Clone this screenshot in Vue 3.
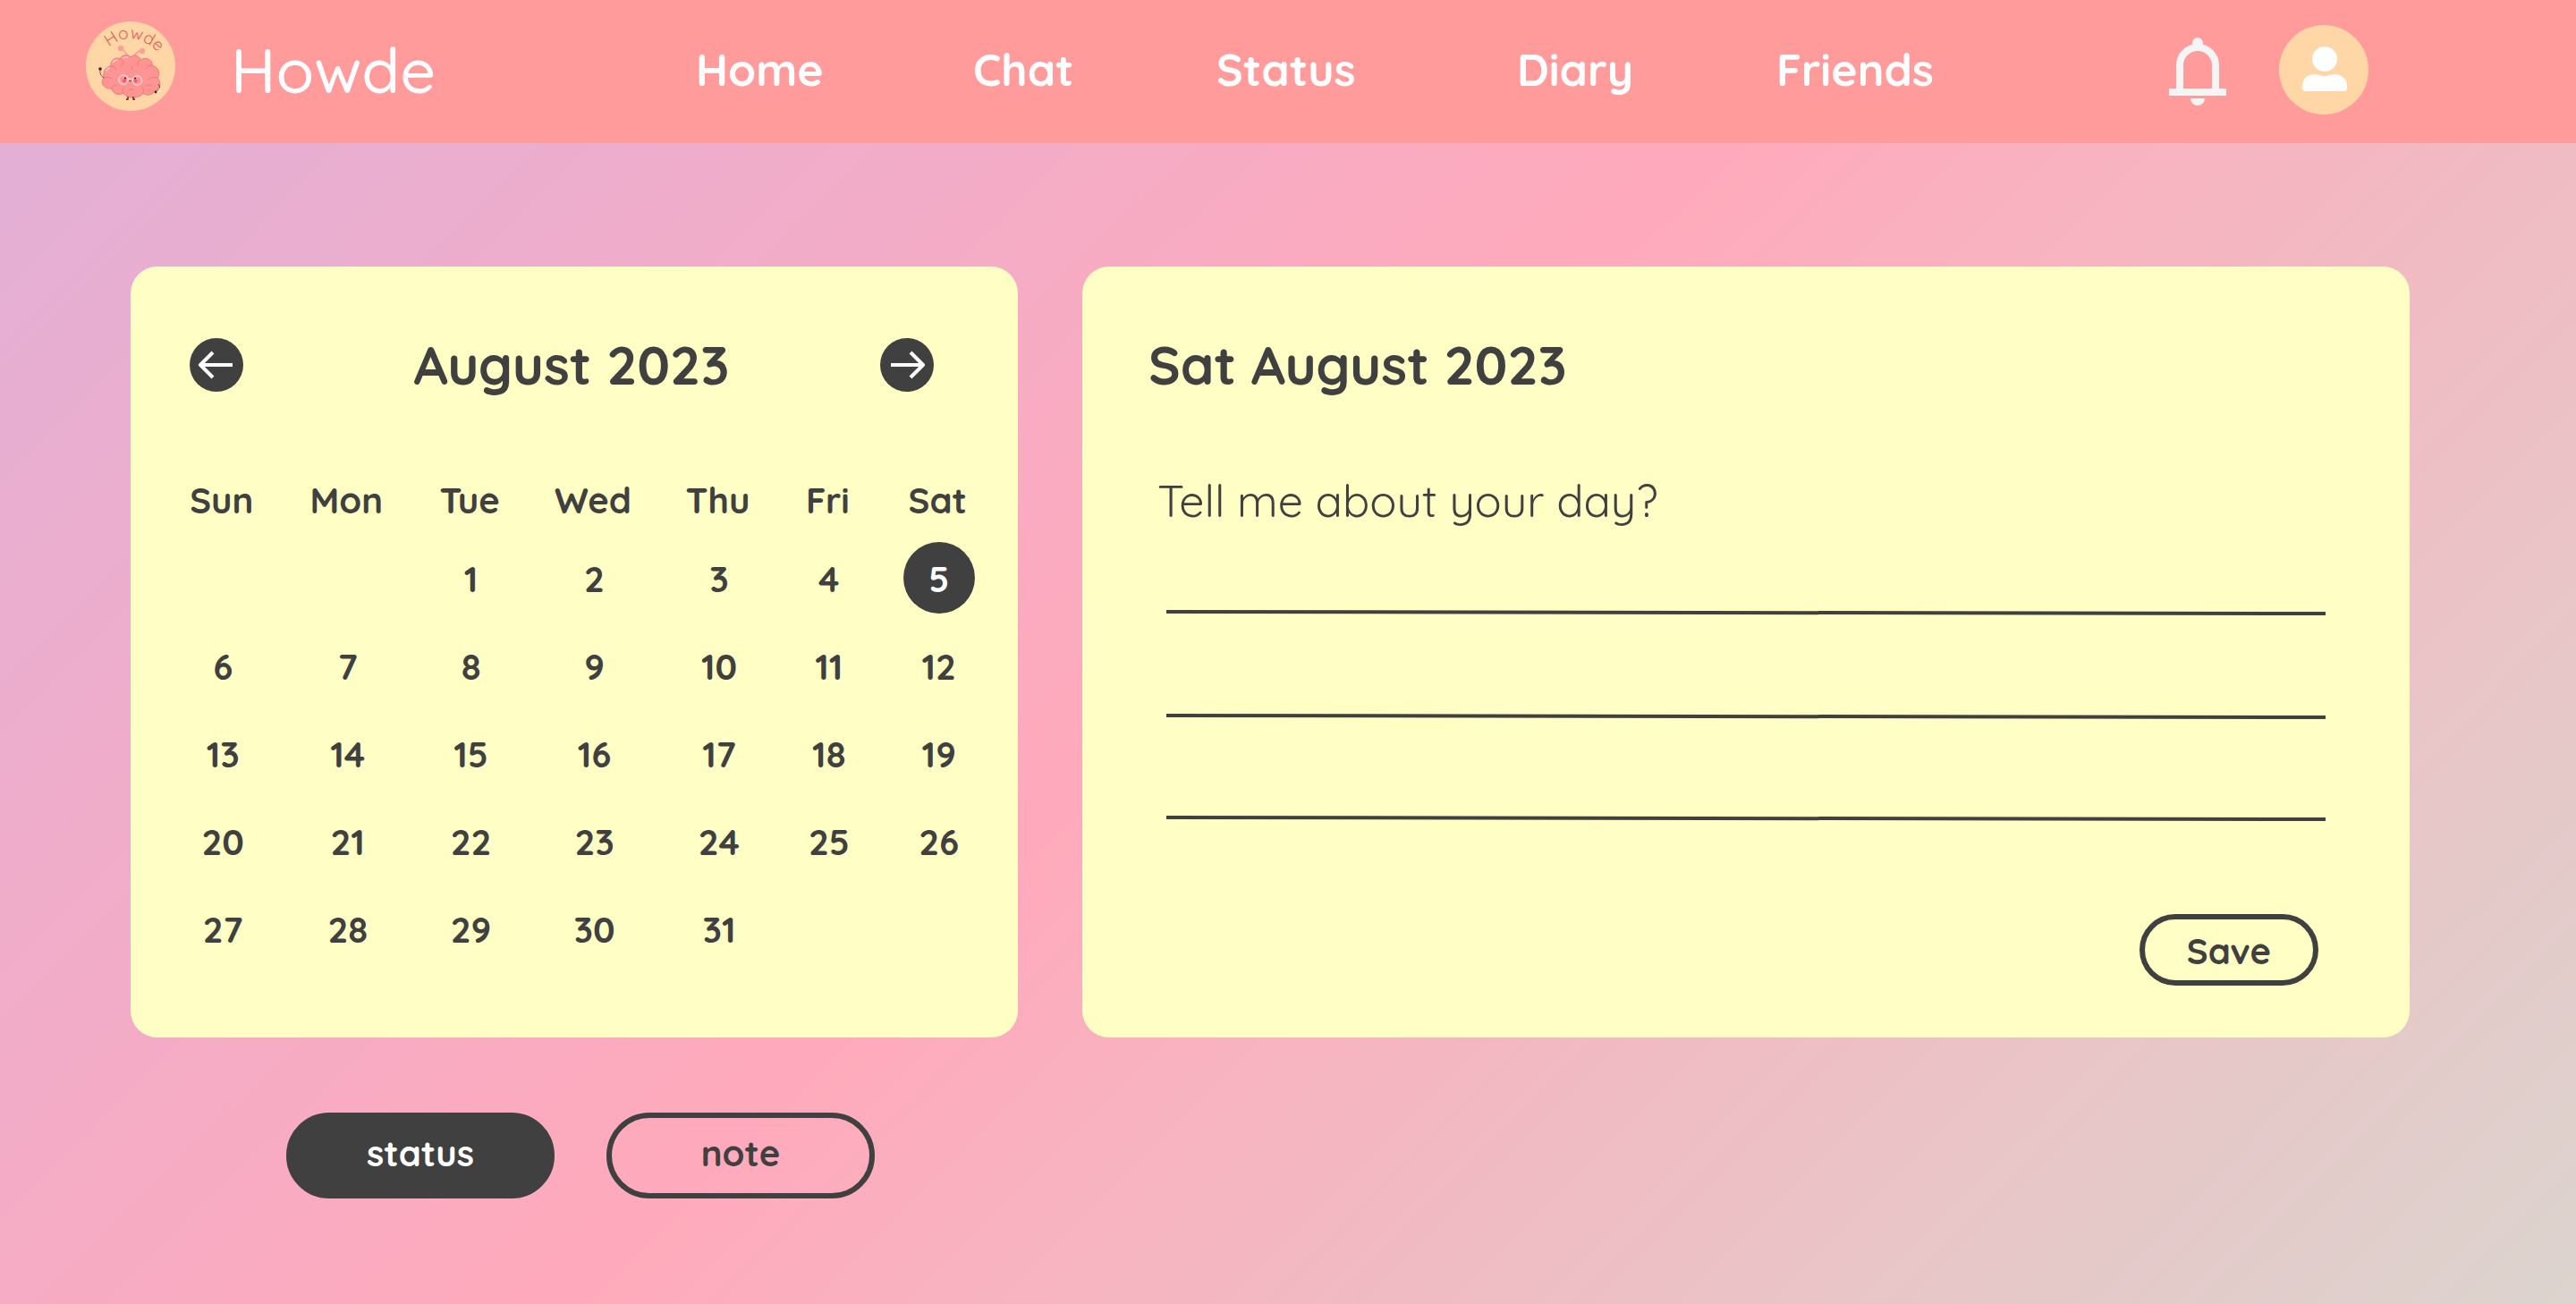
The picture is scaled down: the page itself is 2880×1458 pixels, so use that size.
<script setup>
import { ref } from 'vue'

const links = ['Home', 'Chat', 'Status', 'Diary', 'Friends']
const weekdays = ['Sun', 'Mon', 'Tue', 'Wed', 'Thu', 'Fri', 'Sat']
const firstWeekday = 2
const daysInMonth = 31

const weeks = Array.from({ length: 5 }, (_, w) =>
  Array.from({ length: 7 }, (_, d) => {
    const day = w * 7 + d - firstWeekday + 1
    return day >= 1 && day <= daysInMonth ? day : null
  })
)

const selected = ref(5)
const mode = ref('status')
const entry = ref('')
</script>

<template>
  <div class="page">
    <header class="topbar">
      <a class="brand" href="#">
        <svg class="logo" viewBox="0 0 100 100" aria-hidden="true">
          <defs>
            <path id="logo-arc" d="M26 29 Q50 8 78 32" />
          </defs>
          <circle cx="50" cy="50" r="50" fill="#ffd6a5" />
          <text class="logo-text"><textPath href="#logo-arc">Howde</textPath></text>
          <g fill="none" stroke="#f7a29b" stroke-width="2" stroke-linecap="round">
            <path d="M47 39 Q44 33 39 30" />
            <path d="M54 39 Q57 33 63 32" />
          </g>
          <circle cx="39" cy="30" r="3.2" fill="#f7a29b" />
          <circle cx="63" cy="33" r="3.2" fill="#f7a29b" />
          <path
            d="M28 50 C27 43 34 39 38 42 C41 36 48 37 50 40 C54 36 60 38 61 43 C67 39 75 43 74 49 C81 51 84 58 80 63 C85 68 83 76 77 77 C75 82 68 84 64 80 C61 86 46 87 42 80 C37 83 30 81 29 75 C21 76 15 69 20 63 C19 56 22 51 28 50 Z"
            fill="#ff9494"
            stroke="#ee7a76"
            stroke-width="1"
          />
          <g fill="none" stroke="#e8736f" stroke-width="0.8" stroke-linecap="round">
            <path d="M28 50 Q33 50 34 54" />
            <path d="M38 42 Q42 43 42 47 Q39 48 39 50" />
            <path d="M61 43 Q57 45 58 50" />
            <path d="M74 49 Q69 49 67 53" />
            <path d="M20 63 Q25 61 29 64" />
            <path d="M80 63 Q74 61 70 65" />
            <path d="M29 75 Q30 71 34 71" />
            <path d="M42 80 Q40 77 42 74" />
            <path d="M64 80 Q66 76 63 73" />
            <path d="M48 77 Q51 74 54 77" />
            <path d="M52 50 Q50 52 52 54" />
            <path d="M67 72 Q71 70 73 72" />
          </g>
          <g fill="none" stroke="#ffd9dc" stroke-width="1.2" stroke-linecap="round">
            <path d="M30 46 Q32 43 35 43" />
            <path d="M23 55 Q24 53 26 52" />
            <path d="M42 41 Q44 39 47 40" />
            <circle cx="42" cy="65" r="5.2" />
            <circle cx="57.5" cy="66" r="5.2" />
            <path d="M47 65 Q50 63 52 65" />
          </g>
          <circle cx="43" cy="66.5" r="2" fill="#ff5a62" />
          <circle cx="55.5" cy="66.5" r="2" fill="#ff5a62" />
          <circle cx="44" cy="63.5" r="1.1" fill="#4b1a1c" />
          <circle cx="55" cy="63.5" r="1.1" fill="#4b1a1c" />
          <path d="M48 66 Q49.5 68 51 66" fill="none" stroke="#4b1a1c" stroke-width="0.8" />
          <path d="M20 63 Q15 60 16 54" fill="none" stroke="#6a2b2b" stroke-width="0.8" />
          <circle cx="16" cy="53" r="1.8" fill="#4b1a1c" />
          <path d="M81 70 Q85 74 79 78" fill="none" stroke="#6a2b2b" stroke-width="0.8" />
          <path d="M82 75 Q84 77 81 79" fill="none" stroke="#ffffff" stroke-width="1.5" />
          <circle cx="78" cy="79" r="1.4" fill="#4b1a1c" />
          <path d="M47 84 V87 H45 M53 84 V87 H55" fill="none" stroke="#4b1a1c" stroke-width="1.3" />
        </svg>
        <span class="brand-name">Howde</span>
      </a>

      <nav class="nav" aria-label="Main">
        <a v-for="link in links" :key="link" href="#">{{ link }}</a>
      </nav>

      <div class="actions">
        <button class="icon-button" type="button" aria-label="Notifications">
          <svg class="bell" viewBox="0 0 64 76" aria-hidden="true">
            <path d="M26 12 V6 a6 6 0 0 1 12 0 V12 Z" fill="#f5f5f5" />
            <path d="M12 60 V31 a20 20 0 0 1 40 0 V60" fill="none" stroke="#f5f5f5" stroke-width="8" />
            <path d="M0 57 H64 V65 H0 Z M24 68 H40 a8 8 0 0 1 -16 0 Z" fill="#f5f5f5" />
          </svg>
        </button>
        <button class="icon-button" type="button" aria-label="Profile">
          <svg class="avatar" viewBox="0 0 100 100" aria-hidden="true">
            <circle cx="50" cy="50" r="50" fill="#ffd6a5" />
            <circle cx="51" cy="38" r="14" fill="#ffffff" />
            <path
              d="M38 55 Q42 55 45 56 Q51 58 57 56 Q60 55 64 55 Q76 57 76 69 V70 Q76 74 72 74 H30 Q26 74 26 70 V69 Q26 57 38 55 Z"
              fill="#ffffff"
            />
          </svg>
        </button>
      </div>
    </header>

    <main class="content">
      <section class="card calendar">
        <div class="calendar-head">
          <button class="icon-button" type="button" aria-label="Previous month">
            <svg class="arrow" viewBox="0 0 60 60" aria-hidden="true">
              <circle cx="30" cy="30" r="30" fill="#404040" />
              <path d="M48 30 H12 M26 16 L12 30 L26 44" fill="none" stroke="#ffffff" stroke-width="4" stroke-linejoin="round" />
            </svg>
          </button>
          <h2>August 2023</h2>
          <button class="icon-button" type="button" aria-label="Next month">
            <svg class="arrow" viewBox="0 0 60 60" aria-hidden="true">
              <circle cx="30" cy="30" r="30" fill="#404040" />
              <path d="M12 30 H48 M34 16 L48 30 L34 44" fill="none" stroke="#ffffff" stroke-width="4" stroke-linejoin="round" />
            </svg>
          </button>
        </div>

        <table class="month">
          <colgroup>
            <col v-for="name in weekdays" :key="name" :class="'col-' + name.toLowerCase()" />
          </colgroup>
          <thead>
            <tr>
              <th v-for="name in weekdays" :key="name" scope="col">{{ name }}</th>
            </tr>
          </thead>
          <tbody>
            <tr v-for="(week, w) in weeks" :key="w">
              <td v-for="(day, d) in week" :key="d">
                <button
                  v-if="day"
                  type="button"
                  class="day"
                  :class="{ selected: day === selected }"
                  @click="selected = day"
                >{{ day }}</button>
              </td>
            </tr>
          </tbody>
        </table>
      </section>

      <form class="card diary" @submit.prevent>
        <h2>Sat August 2023</h2>
        <label for="entry">Tell me about your day?</label>
        <div class="paper">
          <svg class="rules" viewBox="0 0 1296 238" preserveAspectRatio="none" aria-hidden="true">
            <g stroke="#404040" stroke-width="4">
              <path d="M0 2 L1296 4" />
              <path d="M0 118 L1296 120" />
              <path d="M0 232 L1296 234" />
            </g>
          </svg>
          <textarea id="entry" v-model="entry"></textarea>
        </div>
        <button class="pill save" type="submit">Save</button>
      </form>

      <div class="modes">
        <button
          v-for="name in ['status', 'note']"
          :key="name"
          type="button"
          class="pill mode"
          :class="{ active: mode === name }"
          @click="mode = name"
        >{{ name }}</button>
      </div>
    </main>
  </div>
</template>

<style>
body {
  margin: 0;
}
</style>

<style scoped>
.page {
  min-height: 100vh;
  box-sizing: border-box;
  background: linear-gradient(135deg, #e1b0d8 0%, #ffaabc 48%, #dcd4ce 100%);
  color: #404040;
  font-family: Quicksand, Lato, sans-serif;
  font-size: 40px;
  font-weight: 700;
}

button {
  font: inherit;
  color: inherit;
  cursor: pointer;
}

h2 {
  margin: 0;
  font-size: 60px;
  line-height: 72px;
  font-weight: 700;
}

.topbar {
  display: flex;
  align-items: center;
  height: 160px;
  padding: 0 232px 4px 96px;
  box-sizing: border-box;
  background: #ff9b9b;
  color: #ffffff;
}

.brand {
  display: flex;
  align-items: center;
  gap: 62px;
  width: 682px;
  color: inherit;
  text-decoration: none;
}

.logo {
  width: 100px;
  height: 100px;
  margin-bottom: 8px;
}

.logo-text {
  fill: #e2625a;
  font-size: 19px;
  font-weight: 400;
}

.brand-name {
  font-size: 70px;
  line-height: 84px;
  font-weight: 500;
}

.nav {
  flex: 1;
  display: grid;
  grid-template-columns: 310fr 272fr 336fr 290fr 439fr;
  font-size: 50px;
  line-height: 60px;
}

.nav a {
  color: inherit;
  text-decoration: none;
}

.actions {
  display: flex;
  align-items: center;
  gap: 59px;
}

.icon-button {
  display: block;
  padding: 0;
  border: 0;
  background: none;
}

.icon-button svg {
  display: block;
}

.bell {
  width: 64px;
  height: 76px;
  padding-top: 4px;
}

.avatar {
  width: 100px;
  height: 100px;
}

.content {
  display: grid;
  grid-template-columns: 992fr 1484fr;
  column-gap: 72px;
  row-gap: 84px;
  padding: 138px 186px 118px 146px;
}

.card {
  box-sizing: border-box;
  border-radius: 30px;
  background: #fffec4;
}

.calendar {
  padding: 74px 20px 73px 32px;
}

.calendar-head {
  display: grid;
  grid-template-columns: 60px 1fr 60px;
  align-items: center;
  padding: 0 74px 0 34px;
}

.calendar-head h2 {
  padding-left: 22px;
  text-align: center;
}

.arrow {
  width: 60px;
  height: 60px;
}

.month {
  width: 100%;
  margin-top: 90px;
  border-collapse: collapse;
  table-layout: fixed;
  text-align: center;
}

.col-tue {
  width: 14.5%;
}

.col-fri {
  width: 11.3%;
}

.month th {
  height: 62px;
  padding: 1px 0 0;
  line-height: 48px;
  vertical-align: top;
}

.month td {
  height: 98px;
  padding: 0 0 0 3px;
}

.day {
  width: 80px;
  height: 80px;
  padding: 2px 0 0;
  border: 0;
  border-radius: 50%;
  background: none;
  line-height: 48px;
}

.day.selected {
  background: #404040;
  color: #ffffff;
}

.diary {
  display: flex;
  flex-direction: column;
  padding: 74px 94px 58px 74px;
}

.diary label {
  margin-top: 86px;
  padding-left: 10px;
  font-size: 50px;
  line-height: 60px;
  font-weight: 400;
}

.paper {
  display: grid;
  margin: 92px 0 0 20px;
}

.rules,
.paper textarea {
  grid-area: 1 / 1;
  width: 100%;
  height: 238px;
}

.paper textarea {
  box-sizing: border-box;
  margin: 0;
  padding: 0;
  border: 0;
  outline: 0;
  resize: none;
  background: none;
  color: inherit;
  font: inherit;
  font-weight: 400;
  line-height: 116px;
}

.pill {
  box-sizing: border-box;
  padding: 0;
  border: 6px solid #404040;
  border-radius: 48px;
  background: none;
  line-height: 48px;
}

.save {
  width: 200px;
  height: 80px;
  margin: auto 8px 0 auto;
  padding-top: 2px;
}

.modes {
  display: flex;
  justify-content: center;
  gap: 58px;
  padding-left: 14px;
}

.mode {
  width: 300px;
  height: 96px;
  padding-bottom: 6px;
}

.mode.active {
  background: #404040;
  color: #ffffff;
}
</style>
